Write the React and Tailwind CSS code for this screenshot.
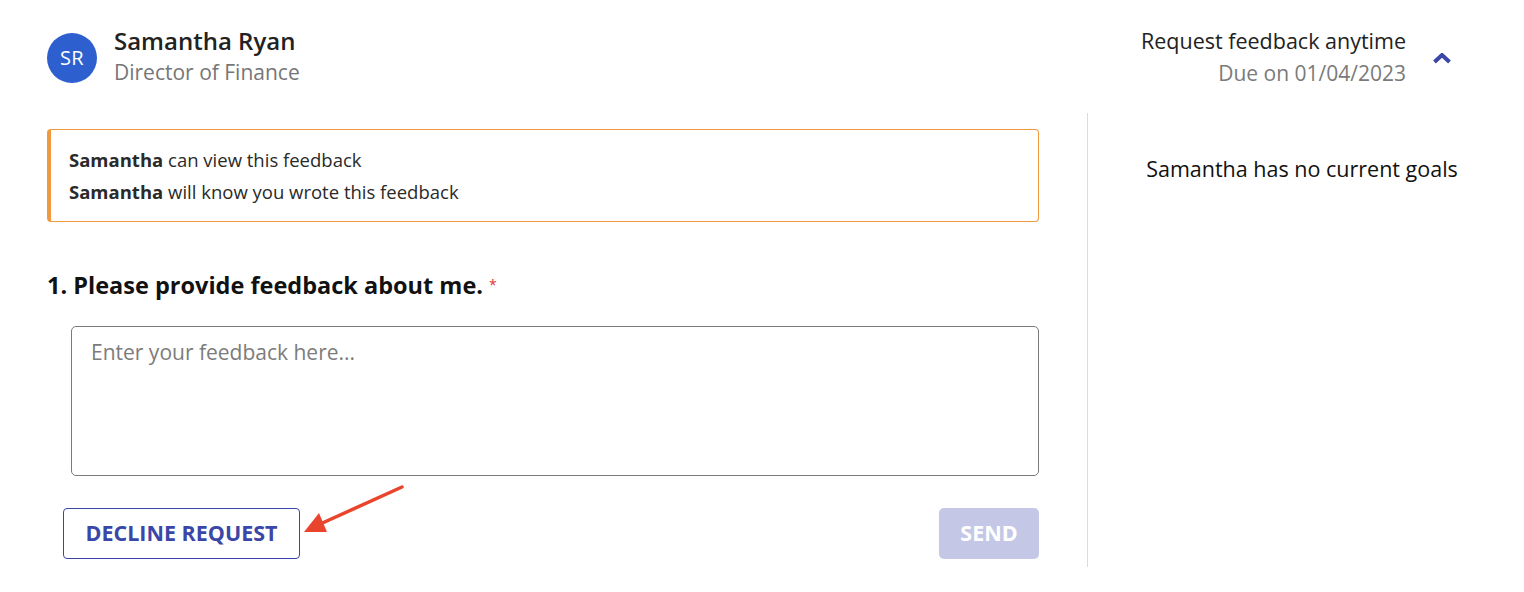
import React from "react";

export default function App() {
  return (
    <div className="w-[1524px] h-[592px] bg-white relative overflow-hidden text-[#222]" style={{ fontFamily: '"Open Sans", "Liberation Sans", sans-serif' }}>
      <div className="flex">
        {/* Left column */}
        <div className="w-[1088px] shrink-0">
          <div className="flex pl-[47px] pt-[33px] h-[113px] items-start">
            <div className="w-[50px] h-[50px] rounded-full bg-[#2d5fcf] text-white flex items-center justify-center text-[20px] tracking-[0.3px]">SR</div>
            <div className="ml-[17px] -mt-[9px]">
              <div className="text-[24px] font-semibold leading-[33px] text-[#222]">Samantha Ryan</div>
              <div className="text-[21px] leading-[30px] text-[#767676]">Director of Finance</div>
            </div>
          </div>
          <div className="border-r border-[#dcdcdc] pr-[48px] pl-[47px] pt-[16px] pb-[8px]">
            <div className="border border-[#f0993f] border-l-[4px] rounded-[4px] h-[93px] pl-[18px] pt-[14px] text-[18.5px] text-[#2a2a2a]">
              <div className="leading-[32px]"><span className="font-bold">Samantha</span> can view this feedback</div>
              <div className="leading-[32px]"><span className="font-bold">Samantha</span> will know you wrote this feedback</div>
            </div>
            <div className="mt-[49px] flex items-start text-[23.5px] font-bold text-[#111] leading-[28px]">
              1. Please provide feedback about me.
              <span className="text-[#d33] text-[14px] ml-[6px] mt-[4px] leading-[20px] font-normal">*</span>
            </div>
            <div className="ml-[24px] mt-[27px] h-[150px] border border-[#7a7a7a] rounded-[5px] px-[19px] pt-[10px] text-[21px] text-[#7c7c7c] leading-[30px]">
              Enter your feedback here...
            </div>
            <div className="mt-[32px] flex justify-between items-center pl-[16px]">
              <div className="w-[237px] h-[51px] border border-[#3b47a8] rounded-[4px] flex items-center justify-center text-[#3b47a8] font-bold text-[21.5px]">DECLINE REQUEST</div>
              <div className="w-[100px] h-[51px] bg-[#c4c8e6] rounded-[5px] flex items-center justify-center text-white font-bold text-[21.5px]">SEND</div>
            </div>
          </div>
        </div>
        {/* Right column */}
        <div className="flex-1">
          <div className="flex justify-end pr-[73px] pt-[26px] h-[113px]">
            <div className="text-right">
              <div className="text-[21.5px] leading-[30px] text-[#222]">Request feedback anytime</div>
              <div className="text-[21px] leading-[30px] text-[#7a7a7a] mt-[2px]">Due on 01/04/2023</div>
            </div>
            <svg className="ml-[27px] mt-[27px]" width="18" height="11" viewBox="0 0 18 11">
              <path d="M1.5 9 L9 2 L16.5 9" fill="none" stroke="#3b47a8" strokeWidth="4" strokeLinejoin="miter" />
            </svg>
          </div>
          <div className="text-center text-[21.5px] leading-[30px] text-[#111] pt-[41px] pr-[8px]">Samantha has no current goals</div>
        </div>
      </div>
      {/* Annotation arrow */}
      <svg className="absolute left-0 top-0 pointer-events-none" width="1524" height="592">
        <line x1="402" y1="487" x2="318" y2="525" stroke="#e8452c" strokeWidth="3.5" strokeLinecap="round" />
        <polygon points="304,532 319,513 327,532" fill="#e8452c" />
      </svg>
    </div>
  );
}
